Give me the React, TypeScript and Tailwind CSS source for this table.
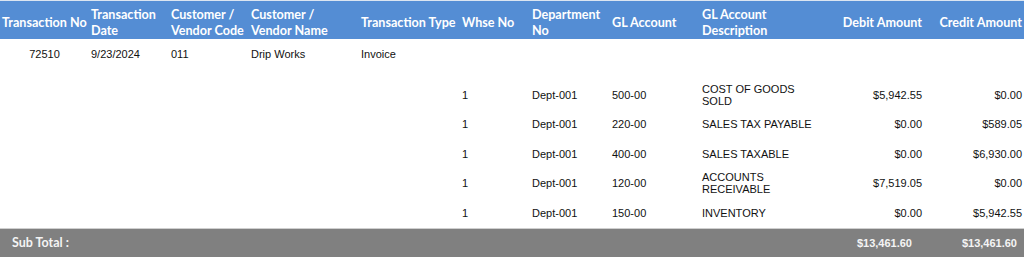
import React from 'react';

type Line = {
  whse: string;
  dept: string;
  gl: string;
  desc: string;
  debit: string;
  credit: string;
};

const lines: Line[] = [
  { whse: '1', dept: 'Dept-001', gl: '500-00', desc: 'COST OF GOODS SOLD', debit: '$5,942.55', credit: '$0.00' },
  { whse: '1', dept: 'Dept-001', gl: '220-00', desc: 'SALES TAX PAYABLE', debit: '$0.00', credit: '$589.05' },
  { whse: '1', dept: 'Dept-001', gl: '400-00', desc: 'SALES TAXABLE', debit: '$0.00', credit: '$6,930.00' },
  { whse: '1', dept: 'Dept-001', gl: '120-00', desc: 'ACCOUNTS RECEIVABLE', debit: '$7,519.05', credit: '$0.00' },
  { whse: '1', dept: 'Dept-001', gl: '150-00', desc: 'INVENTORY', debit: '$0.00', credit: '$5,942.55' },
];

const cols =
  'grid grid-cols-[89px_80px_80px_110px_101px_70px_80px_90px_120px_106px_1fr]';

const headers = [
  { label: 'Transaction No', cls: 'pl-[2px]' },
  { label: 'Transaction Date', cls: 'pl-[2px]' },
  { label: 'Customer / Vendor Code', cls: 'pl-[2px]' },
  { label: 'Customer / Vendor Name', cls: 'pl-[2px] pr-6' },
  { label: 'Transaction Type', cls: 'pl-[2px]' },
  { label: 'Whse No', cls: 'pl-[2px]' },
  { label: 'Department No', cls: 'pl-[2px]' },
  { label: 'GL Account', cls: 'pl-[2px]' },
  { label: 'GL Account Description', cls: 'pl-[2px] pr-4' },
  { label: 'Debit Amount', cls: 'pr-1 text-right justify-end' },
  { label: 'Credit Amount', cls: 'pr-[2px] text-right justify-end' },
];

export default function App() {
  return (
    <div className="w-[1024px] h-[257px] bg-white overflow-hidden font-['Liberation_Sans',Arial,sans-serif] text-[11px] text-[#111]">
      {/* Header */}
      <div
        className={`${cols} h-[39px] border-t border-[#dbe5f1] bg-[#548dd4] text-white font-['Lato',sans-serif] font-bold text-[12.6px] leading-[16px]`}
      >
        {headers.map((h) => (
          <div key={h.label} className={`flex items-center pt-[5px] whitespace-normal ${h.cls}`}>
            <span className={h.cls.includes('text-right') ? 'whitespace-nowrap' : ''}>{h.label}</span>
          </div>
        ))}
      </div>

      {/* Transaction row */}
      <div className={`${cols} h-[30px] items-center`}>
        <div className="text-center">72510</div>
        <div className="pl-[2px]">9/23/2024</div>
        <div className="pl-[2px]">011</div>
        <div className="pl-[2px]">Drip Works</div>
        <div className="pl-[2px]">Invoice</div>
      </div>

      {/* GL lines */}
      <div className="mt-[11px]">
        {lines.map((l) => (
          <div key={l.gl} className={`${cols} h-[29.5px] items-center`}>
            <div className="col-start-6 pl-[2px]">{l.whse}</div>
            <div className="pl-[2px]">{l.dept}</div>
            <div className="pl-[2px]">{l.gl}</div>
            <div className="pl-[2px] leading-[12px]">{l.desc}</div>
            <div className="pr-1 text-right">{l.debit}</div>
            <div className="pr-[2px] text-right">{l.credit}</div>
          </div>
        ))}
      </div>

      {/* Sub total */}
      <div className={`${cols} h-[30px] items-center bg-[#808080] border-t border-[#cfcfcf] text-[#f4f4f4]`}>
        <div className="col-span-9 pl-3 font-['Lato',sans-serif] font-bold text-[12.5px]">Sub Total :</div>
        <div className="pr-[14px] text-right font-bold">$13,461.60</div>
        <div className="pr-[7px] text-right font-bold">$13,461.60</div>
      </div>
    </div>
  );
}
